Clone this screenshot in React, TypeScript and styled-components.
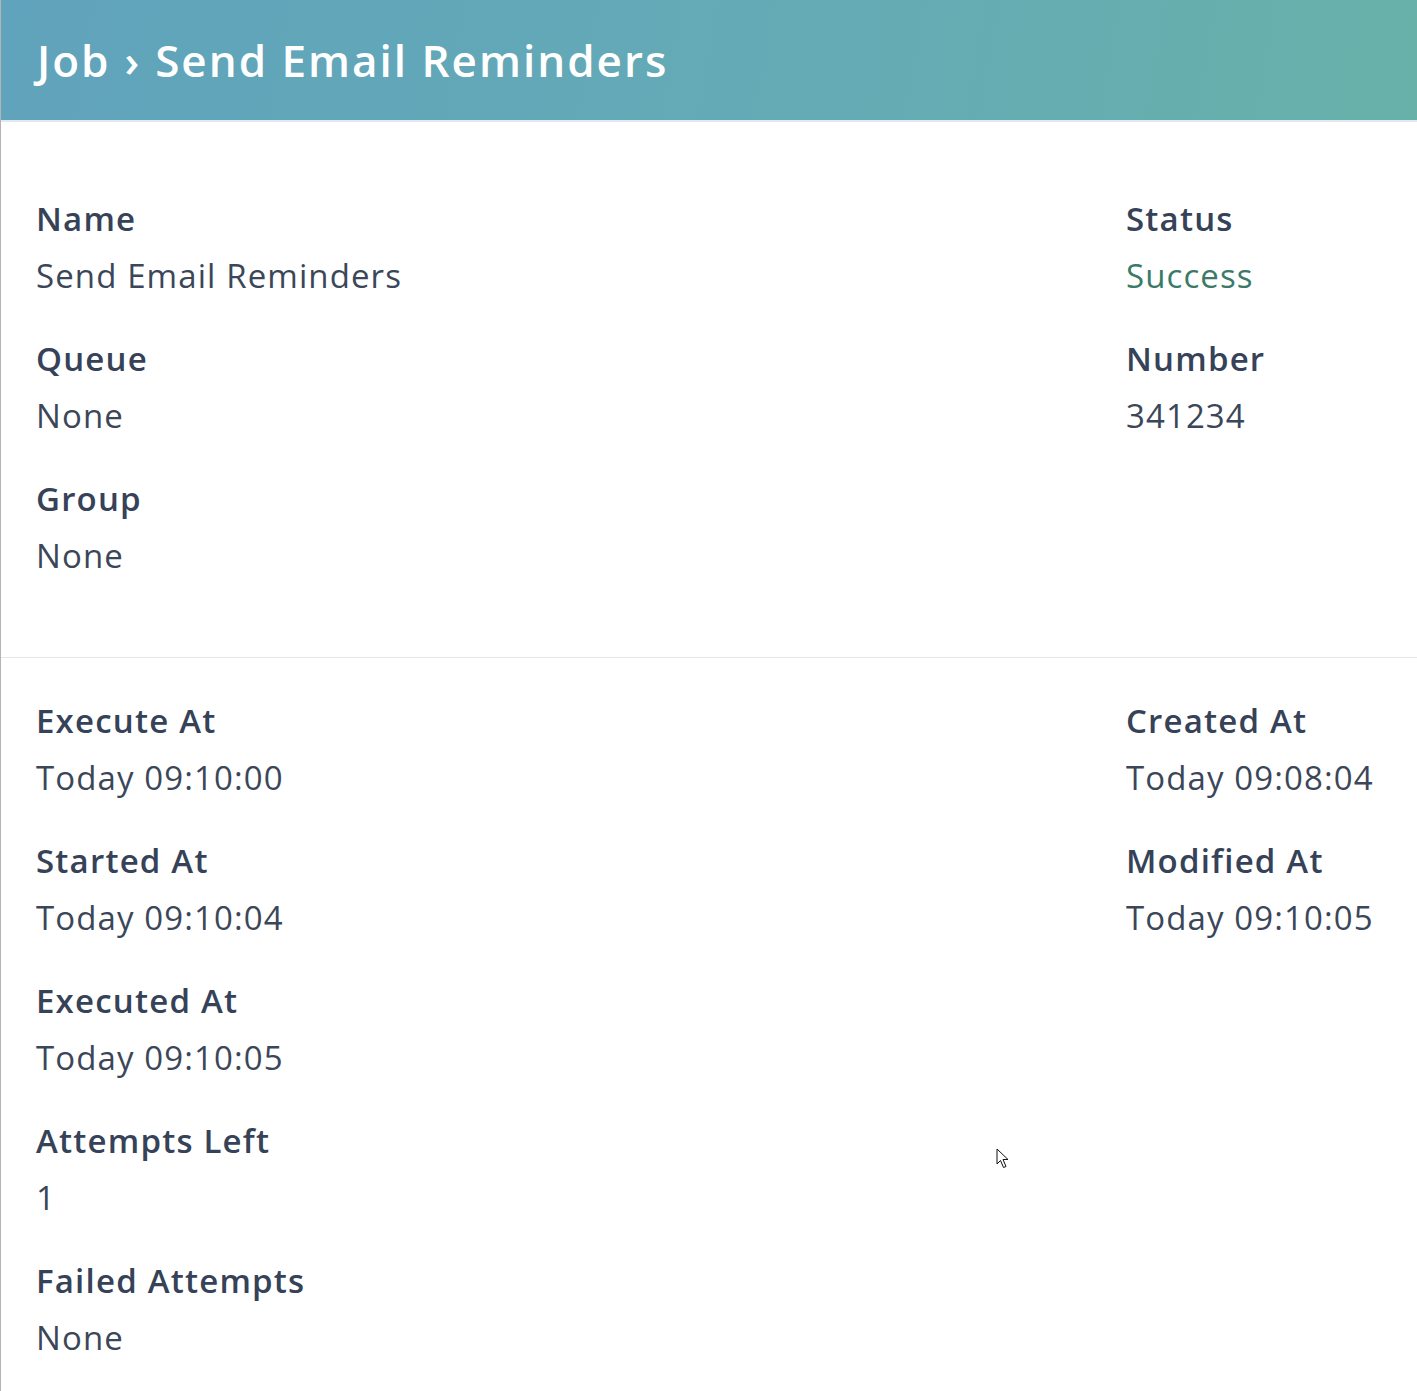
import styled, { createGlobalStyle } from "styled-components";

const GlobalStyle = createGlobalStyle`
    html, body {
        margin: 0;
        padding: 0;
        background: #ffffff;
    }
    body {
        font-family: "Open Sans", "Lato", sans-serif;
        color: #334155;
    }
`;

const Page = styled.div`
    position: relative;
    min-height: 1391px;
    border-left: 1px solid #b4b4b4;
    background: #ffffff;
`;

const Header = styled.header`
    height: 120px;
    display: flex;
    align-items: center;
    padding: 0 36px;
    background: linear-gradient(100deg, #60a3bc 0%, #64abb5 60%, #68b1a9 100%);
    border-bottom: 2px solid #e2e8f0;
`;

const Title = styled.h1`
    margin: 0;
    font-size: 44px;
    line-height: 1;
    font-weight: 600;
    letter-spacing: 2px;
    color: #ffffff;
`;

const Crumb = styled.span`
    margin: 0 14px;
`;

const Section = styled.section<{ $top: number; $bottom: number }>`
    display: grid;
    grid-template-columns: 1fr 291px;
    padding: ${(p) => p.$top}px 0 ${(p) => p.$bottom}px 35px;
    & + & {
        border-top: 1px solid #e5e7eb;
    }
`;

const Column = styled.div`
    display: flex;
    flex-direction: column;
    gap: 43px;
`;

const Field = styled.div`
    display: flex;
    flex-direction: column;
    gap: 17px;
`;

const Label = styled.div`
    font-size: 33px;
    line-height: 40px;
    font-weight: 600;
    letter-spacing: 1.2px;
    color: #354257;
`;

const Value = styled.div<{ $tone?: "success" }>`
    font-size: 33px;
    line-height: 40px;
    font-weight: 400;
    letter-spacing: 1.1px;
    color: ${(p) => (p.$tone === "success" ? "#3b7a69" : "#3b4759")};
`;

const Cursor = styled.svg`
    position: absolute;
    left: 995px;
    top: 1148px;
    width: 14px;
    height: 22px;
`;

type Item = { label: string; value: string; tone?: "success" };

const general: [Item[], Item[]] = [
    [
        { label: "Name", value: "Send Email Reminders" },
        { label: "Queue", value: "None" },
        { label: "Group", value: "None" },
    ],
    [
        { label: "Status", value: "Success", tone: "success" },
        { label: "Number", value: "341234" },
    ],
];

const timing: [Item[], Item[]] = [
    [
        { label: "Execute At", value: "Today 09:10:00" },
        { label: "Started At", value: "Today 09:10:04" },
        { label: "Executed At", value: "Today 09:10:05" },
        { label: "Attempts Left", value: "1" },
        { label: "Failed Attempts", value: "None" },
    ],
    [
        { label: "Created At", value: "Today 09:08:04" },
        { label: "Modified At", value: "Today 09:10:05" },
    ],
];

function Fields({ items }: { items: Item[] }) {
    return (
        <Column>
            {items.map((it) => (
                <Field key={it.label}>
                    <Label>{it.label}</Label>
                    <Value $tone={it.tone}>{it.value}</Value>
                </Field>
            ))}
        </Column>
    );
}

export default function App() {
    return (
        <>
            <GlobalStyle />
            <Page>
                <Header>
                    <Title>
                        Job<Crumb>›</Crumb>Send Email Reminders
                    </Title>
                </Header>
                <Section $top={77} $bottom={81}>
                    <Fields items={general[0]} />
                    <Fields items={general[1]} />
                </Section>
                <Section $top={43} $bottom={40}>
                    <Fields items={timing[0]} />
                    <Fields items={timing[1]} />
                </Section>
                <Cursor viewBox="0 0 14 22">
                    <path
                        d="M1 1 L1 16 L4.5 12.5 L7.5 19.5 L10 18.5 L7 11.5 L12 11.5 Z"
                        fill="#ffffff"
                        stroke="#111111"
                        strokeWidth="1"
                        strokeLinejoin="round"
                    />
                </Cursor>
            </Page>
        </>
    );
}
